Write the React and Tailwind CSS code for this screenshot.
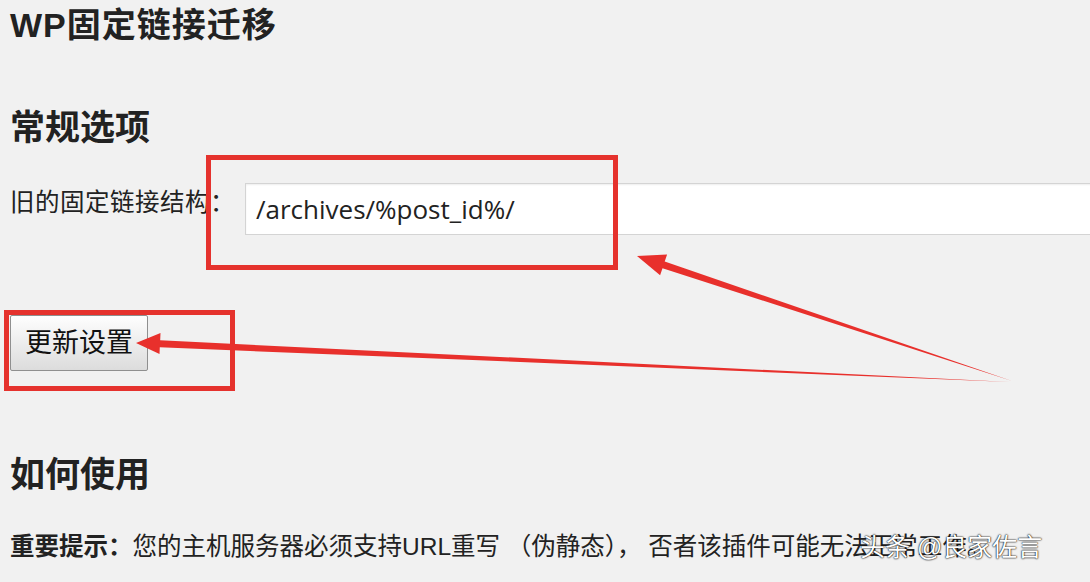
import React from "react";

const cjk = { fontFamily: '"Liberation Sans", "Noto Sans CJK SC", sans-serif' };

function Arrows() {
  // annotation arrows drawn over the screenshot
  return (
    <svg className="absolute inset-0 pointer-events-none" width="1090" height="582" viewBox="0 0 1090 582">
      <polygon
        fill="#e8302c"
        points="637,256 667.1,254.5 664.7,261.6 1012,381 662.5,268.2 660.1,275.3"
      />
      <polygon
        fill="#e8302c"
        points="136,343 160.5,333 160.2,340.3 1010,382 159.8,347.3 159.5,354"
      />
    </svg>
  );
}

export default function App() {
  return (
    <div className="relative w-[1090px] h-[582px] overflow-hidden bg-[#f1f1f1] text-[#1d1d1d]" style={cjk}>
      <div className="pl-[10px]">
        <h1 className="pt-[5px] text-[34px] leading-[40px] font-bold tracking-[1px] text-[#222]">
          WP固定链接迁移
        </h1>

        <h2 className="mt-[63px] text-[35px] leading-[40px] font-bold text-[#222]">常规选项</h2>

        <div className="mt-[35px] flex items-center">
          <label className="w-[235px] shrink-0 whitespace-nowrap text-[24.5px] tracking-[0.5px] leading-[32px] -mt-[12px] text-[#222]">
            旧的固定链接结构：
          </label>
          <div className="h-[52px] w-[860px] shrink-0 border border-[#d4d4d4] bg-white shadow-[inset_0_1px_2px_rgba(0,0,0,0.07)] flex items-center pl-[10px]">
            <span className="text-[26px] text-[#222]" style={{ fontFamily: '"Open Sans", "Noto Sans CJK SC", sans-serif' }}>
              /archives/%post_id%/
            </span>
          </div>
        </div>

        <button
          type="button"
          className="mt-[80px] block h-[56px] w-[138px] rounded-[2px] border border-[#8f8f8f] bg-gradient-to-b from-[#fefefe] to-[#dcdcdc] text-[27px] leading-none text-[#111]"
        >
          更新设置
        </button>

        <h2 className="mt-[84px] text-[35px] leading-[40px] font-bold text-[#222]">如何使用</h2>

        <p className="mt-[36px] whitespace-pre text-[24.5px] leading-[32px] text-[#222]">
          <strong className="font-bold">重要提示：</strong>
          您的主机服务器必须支持URL重写 （伪静态）， 否者该插件可能无法正常工作。
        </p>
      </div>

      {/* red highlight boxes */}
      <div className="absolute left-[206px] top-[155px] w-[412px] h-[115px] border-[5px] border-[#e5322d]" />
      <div className="absolute left-[4px] top-[310px] w-[231px] h-[81px] border-[5px] border-[#e5322d]" />

      <Arrows />

      {/* watermark */}
      <div className="absolute left-[860px] top-[531px] text-[25px] leading-[32px] text-white [text-shadow:0_0_2px_#000,0_0_1px_#000]">
        头条 @良家佐言
      </div>
    </div>
  );
}
